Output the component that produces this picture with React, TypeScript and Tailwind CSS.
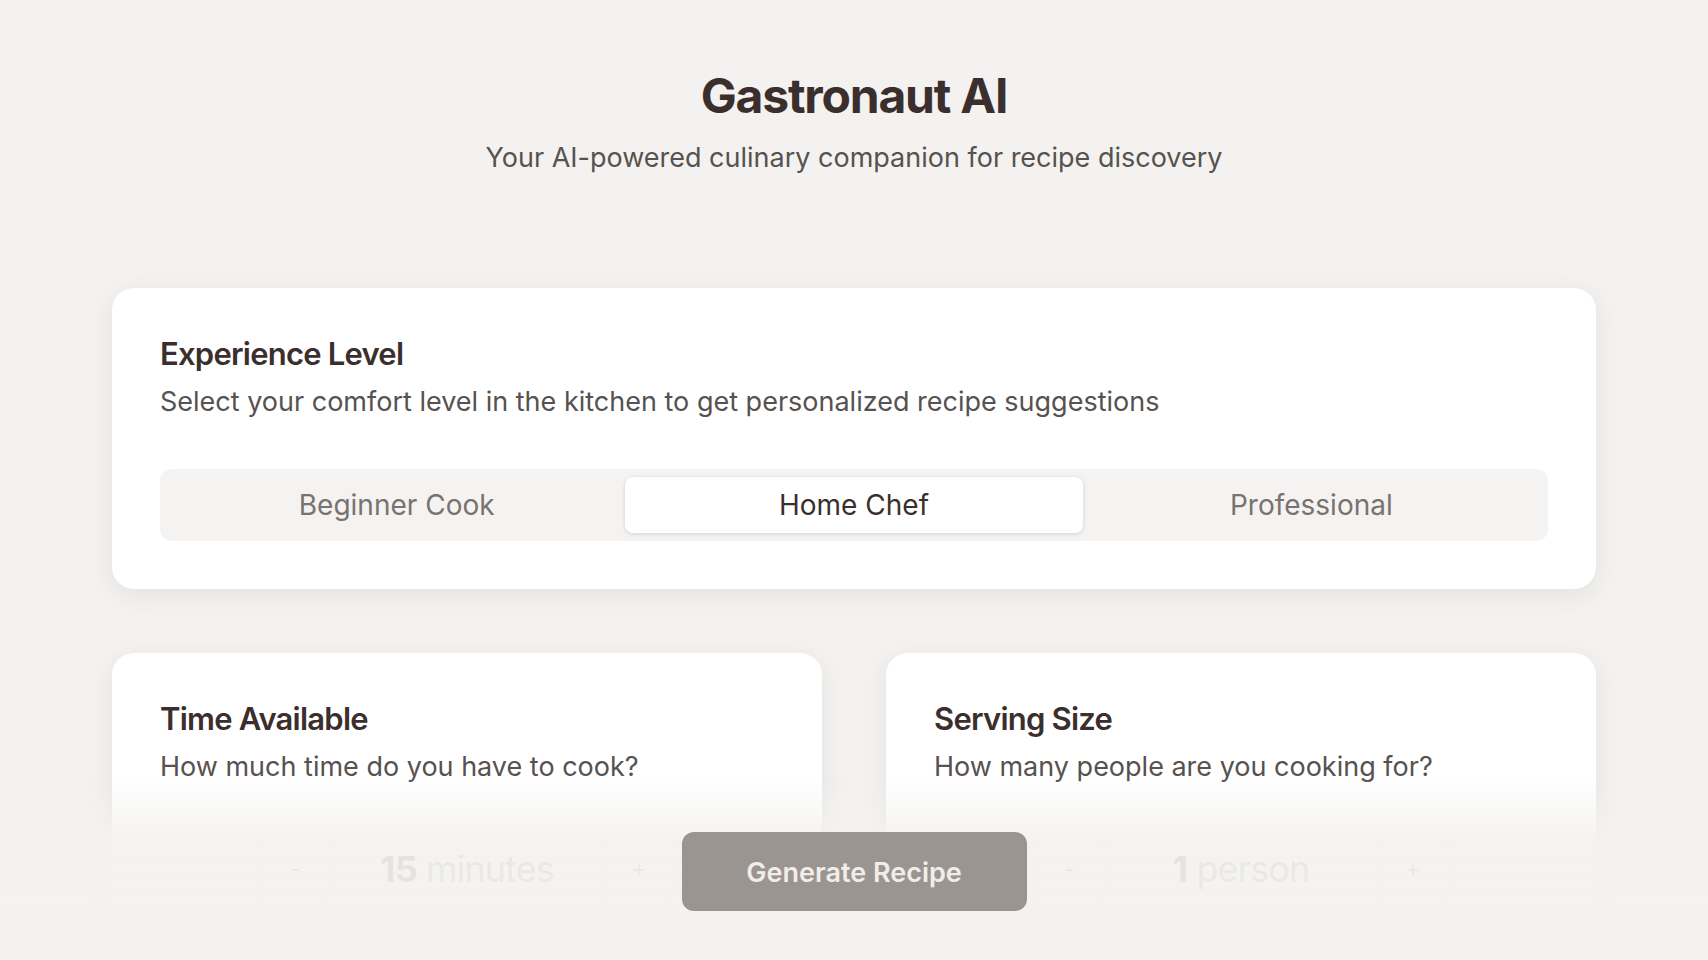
import { useState } from "react";

const levels = ["Beginner Cook", "Home Chef", "Professional"];

function Stepper({ value, unit }: { value: number; unit: string }) {
    return (
        <div className="flex items-center justify-center">
            <button className="w-18 h-18 rounded-xl border border-[#e7e3e0] bg-white text-2xl text-[#7a726e]">-</button>
            <div className="w-[272px] text-center text-4xl tracking-tight">
                <span className="font-bold text-[#3b2f2d]">{value}</span>{" "}
                <span className="text-[#7a726e]">{unit}</span>
            </div>
            <button className="w-18 h-18 rounded-xl border border-[#e7e3e0] bg-white text-2xl text-[#7a726e]">+</button>
        </div>
    );
}

function Card({ title, subtitle, children }: { title: string; subtitle: string; children: React.ReactNode }) {
    return (
        <section className="bg-white rounded-[22px] shadow-[0_6px_24px_rgba(60,45,40,0.08)] px-12 pt-12 pb-12">
            <h2 className="text-[31px] leading-9 font-semibold tracking-tight text-[#3b2f2d]">{title}</h2>
            <p className="mt-3 text-[27px] leading-9 text-[#57524f]">{subtitle}</p>
            {children}
        </section>
    );
}

export default function App() {
    const [level, setLevel] = useState(1);

    return (
        <div className="min-h-screen bg-[#f3f2f0] font-['Inter',sans-serif] pb-48">
            <header className="pt-[72px] text-center">
                <h1 className="text-5xl font-bold tracking-tight text-[#3b2f2d]">Gastronaut AI</h1>
                <p className="mt-[22px] text-[27px] leading-8 text-[#57524f]">Your AI-powered culinary companion for recipe discovery</p>
            </header>

            <main className="px-[112px] mt-[114px] flex flex-col gap-16">
                <Card title="Experience Level" subtitle="Select your comfort level in the kitchen to get personalized recipe suggestions">
                    <div className="mt-[49px] grid grid-cols-3 p-2 rounded-xl bg-[#f4f3f2]">
                        {levels.map((l, i) => (
                            <button
                                key={l}
                                onClick={() => setLevel(i)}
                                className={
                                    i === level
                                        ? "h-14 rounded-lg bg-white text-[28px] text-[#3b2f2d] shadow-[0_1px_4px_rgba(0,0,0,0.14)]"
                                        : "h-14 rounded-lg text-[28px] text-[#7a726e]"
                                }
                            >
                                {l}
                            </button>
                        ))}
                    </div>
                </Card>

                <div className="grid grid-cols-2 gap-16">
                    <Card title="Time Available" subtitle="How much time do you have to cook?">
                        <div className="mt-[48px]">
                            <Stepper value={15} unit="minutes" />
                        </div>
                        <div className="mt-12 flex items-center gap-5">
                            <div className="h-10 w-12 rounded-lg bg-[#e9e6e3]"></div>
                            <div className="h-10 flex-1 rounded-lg bg-[#f1efed]"></div>
                        </div>
                    </Card>
                    <Card title="Serving Size" subtitle="How many people are you cooking for?">
                        <div className="mt-[48px]">
                            <Stepper value={1} unit="person" />
                        </div>
                        <div className="mt-12 flex items-center gap-5">
                            <div className="h-10 w-12 rounded-lg bg-[#e9e6e3]"></div>
                            <div className="h-10 flex-1 rounded-lg bg-[#f1efed]"></div>
                        </div>
                    </Card>
                </div>
            </main>

            {/* fade over the lower cards */}
            <div className="fixed inset-x-0 bottom-0 h-[182px] bg-linear-to-t from-[#f3f2f0]/95 via-[#f3f2f0]/92 via-65% to-[#f3f2f0]/0 flex justify-center items-end pb-[49px]">
                <button
                    disabled
                    className="w-[345px] h-[79px] rounded-xl bg-[#9b9592] pt-1 text-[27px] font-semibold text-[#f1edea]"
                >
                    Generate Recipe
                </button>
            </div>
        </div>
    );
}
